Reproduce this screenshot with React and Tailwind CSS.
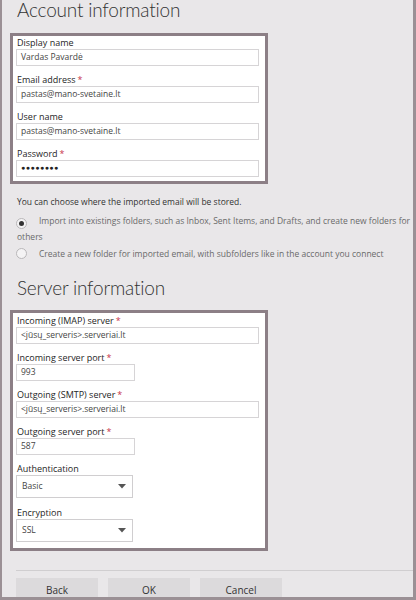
import React from 'react';

const Req = () => <span className="text-[#c8334a] ml-[2px]">*</span>;

const Field = ({ label, required, value, narrow, secret }) => (
  <div className="mb-[8px] last:mb-0">
    <div className="h-[12px] leading-[12px] pl-[1px] text-[9px] text-[#262626]">
      {label}
      {required && <Req />}
    </div>
    <div
      className={`h-[17px] border border-[#d6d4d6] bg-white pl-[4px] flex items-center text-[8.5px] text-[#444] ${
        narrow ? 'w-[119px]' : 'w-[243px]'
      }`}
    >
      {secret ? <span className="text-[7px] tracking-[0.5px] text-[#222]">●●●●●●●●</span> : value}
    </div>
  </div>
);

const Select = ({ label, value }) => (
  <div className="mb-[9px] last:mb-0">
    <div className="h-[12px] leading-[12px] pl-[1px] text-[9px] text-[#262626]">{label}</div>
    <div className="h-[23px] w-[117px] border border-[#d0ced0] bg-white pl-[5px] pr-[6px] flex items-center justify-between text-[8.5px] text-[#444]">
      <span>{value}</span>
      <svg width="8" height="5" viewBox="0 0 8 5">
        <path d="M0 0 L8 0 L4 4.5 Z" fill="#555" />
      </svg>
    </div>
  </div>
);

const Radio = ({ checked }) => (
  <span className="inline-flex align-[-2px] w-[11px] h-[11px] rounded-full border border-[#b9b7b9] bg-[#f4f3f4] items-center justify-center mr-[12px]">
    {checked && <span className="w-[5px] h-[5px] rounded-full bg-[#333]" />}
  </span>
);

export default function App() {
  return (
    <div className="w-[416px] h-[600px] overflow-hidden bg-[#e9e7e9] border-l-2 border-r-[3px] border-b-[3px] border-[#9b9095] font-['Open_Sans',sans-serif]">
      <h1 className="h-[19px] leading-[19px] ml-[15px] mb-[14px] text-[19px] tracking-[-0.2px] font-light text-[#333] font-['Lato',sans-serif]">
        Account information
      </h1>

      <div className="ml-[8px] w-[258px] border-[3px] border-[#8c7f86] bg-white pl-[3px] pt-[1px] pb-[4px]">
        <Field label="Display name" value="Vardas Pavardė" />
        <Field label="Email address" required value="pastas@mano-svetaine.lt" />
        <Field label="User name" value="pastas@mano-svetaine.lt" />
        <Field label="Password" required secret />
      </div>

      <p className="mt-[12px] ml-[15px] h-[12px] leading-[12px] text-[8.5px] text-[#333]">
        You can choose where the imported email will be stored.
      </p>

      <div className="mt-[5px] ml-[14px] text-[8.5px] text-[#6a6a6a] leading-[15px]">
        <div className="whitespace-nowrap">
          <Radio checked />
          Import into existings folders, such as Inbox, Sent Items, and Drafts, and create new folders for
          <br />
          <span className="pl-[1px]">others</span>
        </div>
        <div className="mt-[2px] whitespace-nowrap">
          <Radio />
          Create a new folder for imported email, with subfolders like in the account you connect
        </div>
      </div>

      <h2 className="mt-[17px] h-[19px] leading-[19px] ml-[15px] mb-[13px] text-[19px] tracking-[-0.2px] font-light text-[#333] font-['Lato',sans-serif]">
        Server information
      </h2>

      <div className="ml-[8px] w-[258px] border-[3px] border-[#8c7f86] bg-white pl-[3px] pt-[2px] pb-[6px]">
        <Field label="Incoming (IMAP) server" required value="<jūsų_serveris>.serveriai.lt" />
        <Field label="Incoming server port" required value="993" narrow />
        <Field label="Outgoing (SMTP) server" required value="<jūsų_serveris>.serveriai.lt" />
        <Field label="Outgoing server port" required value="587" narrow />
        <div className="mt-[8px]">
          <Select label="Authentication" value="Basic" />
          <Select label="Encryption" value="SSL" />
        </div>
      </div>

      <div className="mt-[19px] ml-[14px] border-t border-[#d0ced0]" />

      <div className="mt-[7px] ml-[14px] flex gap-[10px]">
        {['Back', 'OK', 'Cancel'].map((b) => (
          <button
            key={b}
            className="w-[82px] h-[24px] bg-[#dcdadc] text-[10px] text-[#333] leading-[22px]"
          >
            {b}
          </button>
        ))}
      </div>
    </div>
  );
}
